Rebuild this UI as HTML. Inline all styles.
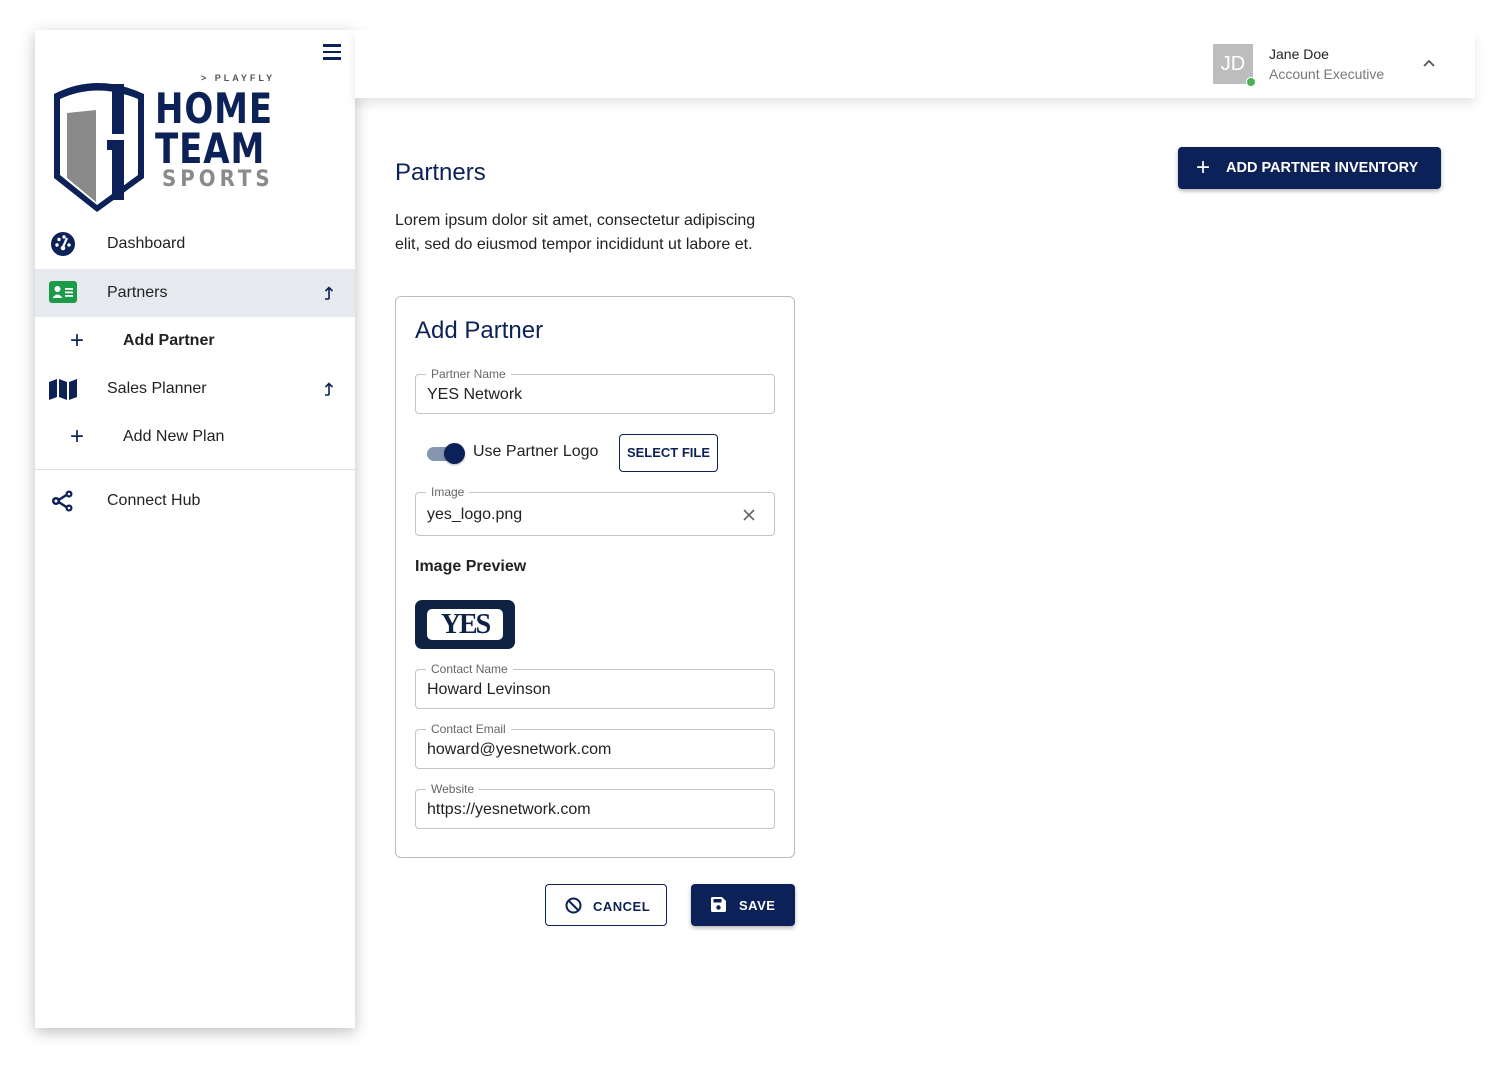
<!DOCTYPE html>
<html><head><style>
*{box-sizing:border-box;margin:0;padding:0}
body{width:1497px;height:1071px;background:#fff;font-family:"Liberation Sans",Arial,sans-serif;position:relative;overflow:hidden;color:#212121}
.abs{position:absolute}
.side{left:35px;top:30px;width:320px;height:998px;background:#fff;box-shadow:0 4px 14px rgba(0,0,0,.25)}
.top{left:355px;top:30px;width:1120px;height:68px;background:#fff;box-shadow:0 6px 10px rgba(0,0,0,.1)}
.nav{position:absolute;left:0;width:320px;height:48px;font-size:16px;color:#222}
.nav span{position:absolute;top:15px}
.navy{color:#0c2157}
.field{position:absolute;left:415px;width:360px;border:1px solid #c4c4c4;border-radius:4px;font-size:16px;color:#222}
.field .lbl{position:absolute;top:-8px;left:10px;background:#fff;padding:0 5px;font-size:12px;color:#666}
.field .val{position:absolute;left:11px}
</style></head><body>
<div class="abs side">
  <div class="abs" style="left:288px;top:14px;width:18px;height:16px">
    <div style="height:2.5px;background:#0c2157;margin-bottom:4px"></div><div style="height:2.5px;background:#0c2157;margin-bottom:4px"></div><div style="height:2.5px;background:#0c2157"></div>
  </div>
  <svg class="abs" style="left:15px;top:48px" width="100" height="138" viewBox="0 0 100 138">
    <path d="M4 16 Q47 -6 94 16 L94 100 L47 134 L4 100 Z" fill="#0c2157"/>
    <path d="M10 21 Q47 4 88 21 L88 97 L47 127 L10 97 Z" fill="#fff"/>
    <path d="M17 35 L46 32 L46 124 L17 100 Z" fill="#8a8a8a"/>
    <rect x="62" y="6" width="12" height="50" fill="#0c2157"/>
    <rect x="62" y="62" width="12" height="60" fill="#0c2157"/>
    <rect x="57" y="62" width="10" height="10" fill="#0c2157"/>
  </svg>
  <div class="abs" style="left:166px;top:43px;font-size:9px;letter-spacing:3px;color:#555;font-weight:bold">&gt; PLAYFLY</div>
  <div class="abs" style="left:120px;top:59px;font-size:42px;line-height:40px;font-weight:900;color:#0c2157;font-family:'DejaVu Sans Condensed','Liberation Sans Narrow',sans-serif;letter-spacing:1px;transform:scaleX(.9);transform-origin:left">HOME<br>TEAM</div>
  <div class="abs" style="left:127px;top:137px;font-size:22px;font-weight:bold;color:#8a8a8a;letter-spacing:4px;font-family:'DejaVu Sans Condensed',sans-serif">SPORTS</div>

  <div class="nav" style="top:190px">
    <svg class="abs" style="left:16px;top:12px" width="24" height="24" viewBox="0 0 24 24"><circle cx="12" cy="12" r="12" fill="#0c2157"/><circle cx="6" cy="13" r="1.7" fill="#fff"/><circle cx="8" cy="7.5" r="1.7" fill="#fff"/><circle cx="13" cy="5" r="1.7" fill="#fff"/><circle cx="18" cy="13" r="1.7" fill="#fff"/><path d="M16 6 L12 15" stroke="#fff" stroke-width="2.2"/><circle cx="12" cy="16" r="2.3" fill="#fff"/></svg>
    <span style="left:72px">Dashboard</span></div>
  <div class="nav" style="top:239px;background:#e6e9ee">
    <svg class="abs" style="left:14px;top:12px" width="28" height="22" viewBox="0 0 28 22"><rect width="28" height="22" rx="3" fill="#1b9b48"/><circle cx="8.5" cy="8" r="3" fill="#fff"/><path d="M3.5 17 Q8.5 10 13.5 17Z" fill="#fff"/><rect x="16" y="7" width="8" height="1.8" fill="#fff"/><rect x="16" y="10.5" width="8" height="1.8" fill="#fff"/><rect x="16" y="14" width="8" height="1.8" fill="#fff"/></svg>
    <span style="left:72px">Partners</span>
    <svg class="abs" style="left:288px;top:17px" width="10" height="14" viewBox="0 0 10 14"><path d="M6 13 L6 2 M2.5 5 L6 1.5 L9.5 5 M6 13 L2 13" stroke="#0c2157" stroke-width="1.6" fill="none"/></svg></div>
  <div class="nav" style="top:287px">
    <span class="navy" style="left:35px;top:10px;font-size:24px;font-weight:300">+</span>
    <span style="left:88px;font-weight:bold">Add Partner</span></div>
  <div class="nav" style="top:335px">
    <svg class="abs" style="left:14px;top:14px" width="28" height="21" viewBox="0 0 28 21"><path d="M0 3 L8 0 L8 18 L0 21Z M10 0 L18 3 L18 21 L10 18Z M20 3 L28 0 L28 18 L20 21Z" fill="#0c2157"/></svg>
    <span style="left:72px">Sales Planner</span>
    <svg class="abs" style="left:288px;top:17px" width="10" height="14" viewBox="0 0 10 14"><path d="M6 13 L6 2 M2.5 5 L6 1.5 L9.5 5 M6 13 L2 13" stroke="#0c2157" stroke-width="1.6" fill="none"/></svg></div>
  <div class="nav" style="top:383px">
    <span class="navy" style="left:35px;top:10px;font-size:24px;font-weight:300">+</span>
    <span style="left:88px">Add New Plan</span></div>
  <div class="abs" style="left:0;top:439px;width:320px;height:1px;background:#ddd"></div>
  <div class="nav" style="top:447px">
    <svg class="abs" style="left:16px;top:13px" width="24" height="22" viewBox="0 0 24 22"><path d="M6 11 L17 4 M6 11 L17 18" stroke="#0c2157" stroke-width="2.5"/><circle cx="5" cy="11" r="4" fill="#0c2157"/><circle cx="18" cy="4" r="3.5" fill="#0c2157"/><circle cx="18" cy="18" r="3.5" fill="#0c2157"/><circle cx="5" cy="11" r="1.5" fill="#fff"/><circle cx="18" cy="4" r="1.3" fill="#fff"/><circle cx="18" cy="18" r="1.3" fill="#fff"/></svg>
    <span style="left:72px">Connect Hub</span></div>
</div>

<div class="abs top">
  <div class="abs" style="left:858px;top:14px;width:40px;height:40px;background:#bdbdbd;color:#fff;font-size:20px;text-align:center;line-height:40px">JD</div>
  <div class="abs" style="left:891px;top:47px;width:10px;height:10px;border-radius:50%;background:#4caf50;border:1.5px solid #fff"></div>
  <div class="abs" style="left:914px;top:16px;font-size:14px;color:#222">Jane Doe</div>
  <div class="abs" style="left:914px;top:36px;font-size:14px;color:#777">Account Executive</div>
  <svg class="abs" style="left:1068px;top:29px" width="12" height="8" viewBox="0 0 12 8"><path d="M1 7 L6 2 L11 7" stroke="#555" stroke-width="1.8" fill="none"/></svg>
</div>

<div class="abs" style="left:1178px;top:147px;width:263px;height:42px;background:#0c2157;border-radius:4px;box-shadow:0 2px 4px rgba(0,0,0,.3);color:#fff;font-size:14.5px;font-weight:bold;letter-spacing:0;line-height:42px">
  <span style="position:absolute;left:18px;font-size:24px;font-weight:300">+</span><span style="position:absolute;left:48px">ADD PARTNER INVENTORY</span></div>

<div class="abs navy" style="left:395px;top:159px;font-size:24px">Partners</div>
<div class="abs" style="left:395px;top:209px;font-size:16px;line-height:24px;color:#222">Lorem ipsum dolor sit amet, consectetur adipiscing<br>elit, sed do eiusmod tempor incididunt ut labore et.</div>

<div class="abs" style="left:395px;top:296px;width:400px;height:562px;border:1px solid #bbb;border-radius:6px"></div>
<div class="abs navy" style="left:415px;top:317px;font-size:24px">Add Partner</div>

<div class="field" style="top:374px;height:40px"><span class="lbl">Partner Name</span><span class="val" style="top:11px">YES Network</span></div>

<div class="abs" style="left:427px;top:447px;width:36px;height:14px;border-radius:7px;background:#8796b0"></div>
<div class="abs" style="left:444px;top:443px;width:21px;height:21px;border-radius:50%;background:#0c2157;box-shadow:0 1px 2px rgba(0,0,0,.3)"></div>
<div class="abs" style="left:473px;top:443px;font-size:16px;color:#222">Use Partner Logo</div>
<div class="abs navy" style="left:619px;top:434px;width:99px;height:38px;border:1px solid #0c2157;border-radius:4px;font-size:13px;font-weight:bold;text-align:center;line-height:36px">SELECT FILE</div>

<div class="field" style="top:492px;height:44px"><span class="lbl">Image</span><span class="val" style="top:13px">yes_logo.png</span>
  <svg class="abs" style="left:327px;top:16px" width="12" height="12" viewBox="0 0 12 12"><path d="M1 1 L11 11 M11 1 L1 11" stroke="#666" stroke-width="1.6"/></svg></div>

<div class="abs" style="left:415px;top:558px;font-size:16px;font-weight:bold;color:#222">Image Preview</div>
<div class="abs" style="left:415px;top:600px;width:100px;height:49px;background:#0e2344;border-radius:7px">
  <div class="abs" style="left:12px;top:9px;width:76px;height:31px;background:#fff;border-radius:5px;color:#0e2344;font-family:'Liberation Serif',serif;font-weight:900;font-size:28px;text-align:center;line-height:31px;letter-spacing:-2px">YES</div></div>

<div class="field" style="top:669px;height:40px"><span class="lbl">Contact Name</span><span class="val" style="top:11px">Howard Levinson</span></div>
<div class="field" style="top:729px;height:40px"><span class="lbl">Contact Email</span><span class="val" style="top:11px">howard@yesnetwork.com</span></div>
<div class="field" style="top:789px;height:40px"><span class="lbl">Website</span><span class="val" style="top:11px">https://yesnetwork.com</span></div>

<div class="abs navy" style="left:545px;top:884px;width:122px;height:42px;border:1px solid #0c2157;border-radius:4px;font-size:13px;font-weight:bold;letter-spacing:.5px">
  <svg class="abs" style="left:19px;top:12px" width="17" height="17" viewBox="0 0 17 17"><circle cx="8.5" cy="8.5" r="7" stroke="#0c2157" stroke-width="2" fill="none"/><path d="M3.5 3.5 L13.5 13.5" stroke="#0c2157" stroke-width="2"/></svg>
  <span class="abs" style="left:47px;top:14px">CANCEL</span></div>
<div class="abs" style="left:691px;top:884px;width:104px;height:42px;background:#0c2157;border-radius:4px;box-shadow:0 2px 4px rgba(0,0,0,.3);color:#fff;font-size:13px;font-weight:bold;letter-spacing:.5px">
  <svg class="abs" style="left:20px;top:13px" width="15" height="15" viewBox="0 0 15 15"><path d="M0 1.5 Q0 0 1.5 0 L11 0 L15 4 L15 13.5 Q15 15 13.5 15 L1.5 15 Q0 15 0 13.5Z" fill="#fff"/><rect x="2.5" y="2" width="8" height="3.5" fill="#0c2157"/><circle cx="7.5" cy="10.5" r="2.2" fill="#0c2157"/></svg>
  <span class="abs" style="left:48px;top:14px">SAVE</span></div>
</body></html>
